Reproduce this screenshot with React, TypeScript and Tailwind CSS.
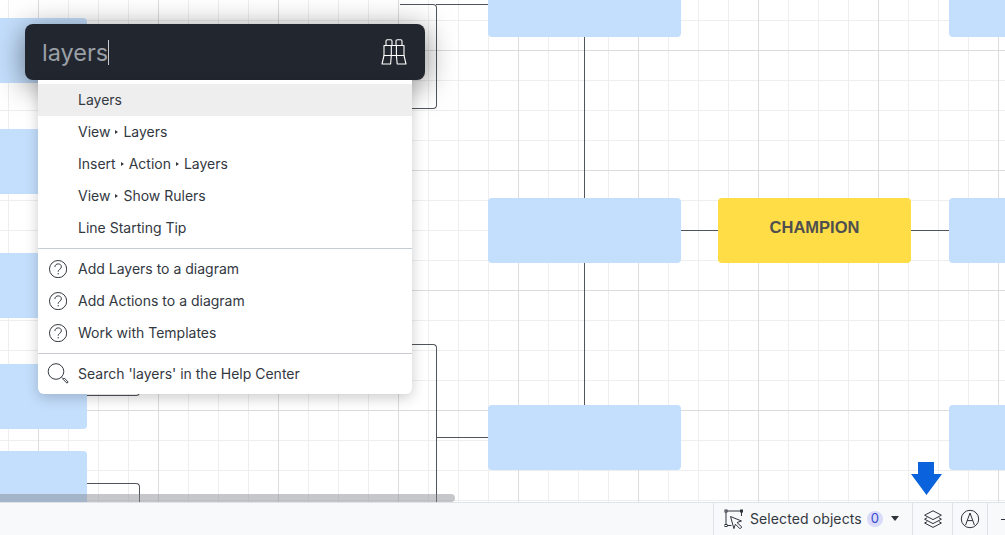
const font = "font-['Inter','Noto_Sans',sans-serif]";

const menuItems = [
  { parts: ["Layers"], active: true },
  { parts: ["View", "Layers"] },
  { parts: ["Insert", "Action", "Layers"] },
  { parts: ["View", "Show Rulers"] },
  { parts: ["Line Starting Tip"] },
];

const helpItems = [
  "Add Layers to a diagram",
  "Add Actions to a diagram",
  "Work with Templates",
];

const nodes = [
  "left-[488px] top-[-28px] w-[193px]",
  "left-[949px] top-[-28px] w-[193px]",
  "left-[488px] top-[198px] w-[193px]",
  "left-[949px] top-[198px] w-[193px]",
  "left-[488px] top-[405px] w-[193px]",
  "left-[949px] top-[405px] w-[193px]",
  "left-[-106px] top-[18px] w-[193px]",
  "left-[-106px] top-[129px] w-[193px]",
  "left-[-106px] top-[253px] w-[193px]",
  "left-[-106px] top-[364px] w-[193px]",
  "left-[-106px] top-[451px] w-[193px]",
];

function HelpIcon() {
  return (
    <svg width="18" height="18" viewBox="0 0 18 18" fill="none" stroke="#33383f" strokeWidth="1">
      <circle cx="9.1" cy="9.1" r="8.6" />
      <path d="M5.9 7C5.9 5 7.4 3.9 9.2 3.9c1.9 0 3.2 1.2 3.2 2.9 0 2.4-3.2 2.4-3.2 4.9" />
      <path d="M9.2 13v1.4" />
    </svg>
  );
}

function SearchIcon() {
  return (
    <svg width="22" height="22" viewBox="0 0 22 22" fill="none" stroke="#33383f" strokeWidth="1">
      <circle cx="9" cy="8.5" r="7.8" />
      <path d="M14.6 14.2l1.6 1.6" />
      <path d="M16 16.2l1.2-1.2 4 4-1.2 1.2z" />
    </svg>
  );
}

function Binoculars() {
  return (
    <svg width="26" height="26" viewBox="0 0 26 26" fill="none" stroke="#ffffff" strokeWidth="1.1" strokeLinejoin="round">
      <path d="M5 6.5V2Q5 .7 6.3.7h3.4q1.3 0 1.3 1.3v4.5" />
      <path d="M15 6.5V2Q15 .7 16.3.7h3.4q1.3 0 1.3 1.3v4.5" />
      <path d="M3 16.5V6.5h20v10z" />
      <path d="M10.3 6.5v10M15.4 6.5v10" />
      <path d="M3 16.5L1 25h8.6l.7-8.5" />
      <path d="M15.4 16.5l.8 8.5H25l-2-8.5" />
    </svg>
  );
}

function SelectedIcon() {
  return (
    <svg width="20" height="20" viewBox="0 0 20 20" fill="none" stroke="#2f343c" strokeWidth="1">
      <path d="M2.5 2h14.5M2 2.5V16M2.5 16.5h5M17.5 3v4" />
      <rect x="1" y="1" width="2" height="2" fill="#f8f9fb" />
      <rect x="16.5" y="1" width="2" height="2" fill="#f8f9fb" />
      <rect x="1" y="15.5" width="2" height="2" fill="#f8f9fb" />
      <path d="M6.5 7.5l11 4.5-4.5 1.5 4.8 4.5-1.8 1.8-4.6-4.6-1.5 4.4z" fill="#f8f9fb" strokeLinejoin="round" />
    </svg>
  );
}

function LayersIcon() {
  return (
    <svg width="20" height="20" viewBox="0 0 20 20" fill="none" stroke="#2f343c" strokeWidth="1" strokeLinejoin="round">
      <path d="M10 1.8l8.4 4.4-8.4 4.4-8.4-4.4z" />
      <path d="M4.2 8.7L1.6 10.2l8.4 4.4 8.4-4.4-2.6-1.5" />
      <path d="M4.2 12.6L1.6 14l8.4 4.4 8.4-4.4-2.6-1.4" />
    </svg>
  );
}

function AutoIcon() {
  return (
    <svg width="20" height="20" viewBox="0 0 20 20" fill="none" stroke="#2f343c" strokeWidth="1" strokeLinejoin="round">
      <circle cx="10" cy="10" r="8.7" />
      <path d="M5.6 16L10 4l4.4 12" />
      <path d="M7.2 11.6h5.6" />
    </svg>
  );
}

export default function App() {
  return (
    <div className={`flex h-[535px] w-[1005px] flex-col overflow-hidden bg-white ${font}`}>
      <main className="relative h-[502px] overflow-hidden bg-white bg-[linear-gradient(#dcdcdc_1px,transparent_1px),linear-gradient(90deg,#dcdcdc_1px,transparent_1px),linear-gradient(#eeeeee_1px,transparent_1px),linear-gradient(90deg,#eeeeee_1px,transparent_1px)] bg-[size:120px_120px,120px_120px,30px_30px,30px_30px] bg-[position:0_50px,38px_0,0_20px,8px_0]">
        {/* connectors */}
        <div className="absolute left-[584px] top-[37px] h-[161px] w-px bg-[#50555c]" />
        <div className="absolute left-[584px] top-[263px] h-[142px] w-px bg-[#50555c]" />
        <div className="absolute left-[681px] top-[230px] h-px w-[37px] bg-[#50555c]" />
        <div className="absolute left-[911px] top-[230px] h-px w-[38px] bg-[#50555c]" />
        <div className="absolute left-[400px] top-[4px] h-[105px] w-[37px] rounded-r-[4px] border-y border-r border-[#50555c]" />
        <div className="absolute left-[436px] top-[4px] h-px w-[52px] bg-[#50555c]" />
        <div className="absolute left-[400px] top-[344px] h-[94px] w-[37px] rounded-tr-[4px] border-r border-t border-[#50555c]" />
        <div className="absolute left-[436px] top-[437px] h-[65px] w-px bg-[#50555c]" />
        <div className="absolute left-[436px] top-[437px] h-px w-[52px] bg-[#50555c]" />
        <div className="absolute left-[87px] top-[380px] h-[16px] w-[53px] rounded-br-[4px] border-b border-r border-[#50555c]" />
        <div className="absolute left-[87px] top-[483px] h-[19px] w-[53px] rounded-tr-[4px] border-r border-t border-[#50555c]" />

        {nodes.map((cls) => (
          <div key={cls} className={`absolute h-[65px] rounded-[4px] bg-[#c4dffd] ${cls}`} />
        ))}
        <div className="absolute left-[718px] top-[198px] flex h-[65px] w-[193px] items-center justify-center rounded-[4px] bg-[#ffdd47] pb-[7px] font-['Liberation_Sans',sans-serif] text-[16.5px] font-bold text-[#4f4f4f]">
          CHAMPION
        </div>

        {/* scrollbar */}
        <div className="absolute bottom-0 left-0 h-[8px] w-[455px] rounded-r-[4px] bg-[#7f8389]/45" />

        {/* arrow annotation */}
        <svg className="absolute left-[911px] top-[462px]" width="31" height="33" viewBox="0 0 31 33" fill="#0a62dc">
          <path d="M7 0h16v12h8L15.5 33 0 12h7z" />
        </svg>

        {/* quick action */}
        <div className="absolute left-[25px] top-[24px] w-[400px]">
          <div className="relative z-10 flex h-[56px] items-center justify-between rounded-[8px] bg-[#22262f] pl-[17px] pr-[18px] shadow-[0_6px_30px_rgba(0,0,0,0.5)]">
            <div className="flex items-center">
              <span className="pt-[1px] text-[23.5px] text-[#9aa0a6]">layers</span>
              <span className="h-[25px] w-px bg-[#c8ccd0]" />
            </div>
            <Binoculars />
          </div>
          <div className="relative z-20 mx-[13px] rounded-b-[6px] bg-white pt-[4px] text-[14px] leading-[32px] text-[#33383f] shadow-[0_4px_14px_rgba(0,0,0,0.2)]">
            {menuItems.map((item) => (
              <div
                key={item.parts.join("-")}
                className={`flex h-[32px] items-center pl-[40px] ${item.active ? "bg-[#eeeeee]" : ""}`}
              >
                {item.parts.map((part, i) => (
                  <span key={part} className="flex items-center">
                    {i > 0 && <span className="mx-[5px] h-0 w-0 border-y-[2.5px] border-l-[3px] border-y-transparent border-l-[#33383f]" />}
                    {part}
                  </span>
                ))}
              </div>
            ))}
            <div className="mb-[4px] mt-[4px] h-px bg-[#c3ced6]" />
            {helpItems.map((label) => (
              <div key={label} className="flex h-[32px] items-center gap-[11px] pl-[11px]">
                <HelpIcon />
                {label}
              </div>
            ))}
            <div className="mb-[4px] mt-[4px] h-px bg-[#c9cdd2]" />
            <div className="flex h-[32px] items-center gap-[9px] pl-[9px]">
              <SearchIcon />
              Search 'layers' in the Help Center
            </div>
            <div className="h-[4px]" />
          </div>
        </div>
      </main>

      <footer className="flex h-[33px] items-center justify-end border-t border-[#dfe3e8] bg-[#f8f9fb] text-[14px] text-[#33383f]">
        <div className="flex h-full w-[199px] items-center border-l border-[#dfe3e8] pb-[1px] pl-[10px]">
          <SelectedIcon />
          <span className="ml-[6px] tracking-[0.1px]">Selected objects</span>
          <span className="ml-[5px] flex h-[16px] w-[16px] items-center justify-center rounded-full bg-[#d9dbf9] text-[13px] text-[#3b4bd0]">0</span>
          <span className="ml-[8px] h-0 w-0 border-x-[4px] border-t-[5px] border-x-transparent border-t-[#2f343c]" />
        </div>
        <div className="flex h-full w-[40px] items-center justify-center border-l border-[#dfe3e8]">
          <LayersIcon />
        </div>
        <div className="flex h-full w-[35px] items-center justify-center border-l border-[#dfe3e8]">
          <AutoIcon />
        </div>
        <div className="flex h-full w-[18px] items-center justify-end border-l border-[#dfe3e8]">
          <span className="h-px w-[4px] bg-[#2f343c]" />
        </div>
      </footer>
    </div>
  );
}
